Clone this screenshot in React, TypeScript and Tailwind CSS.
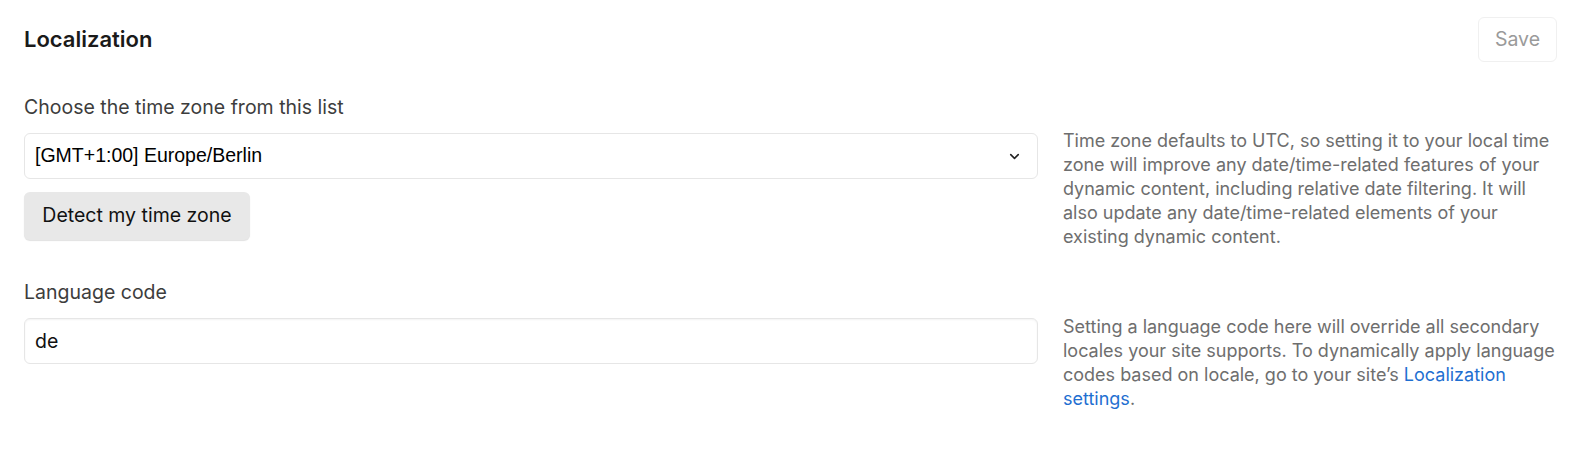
import { ChevronDown } from 'lucide-react';

const inter = { fontFamily: 'Inter, "Noto Sans", sans-serif' };

export default function App() {
  return (
    <div className="h-[454px] w-full bg-white pl-6 pr-[13px] font-['Inter',sans-serif]">
      <div className="flex items-center justify-between pt-[17px]">
        <h1 className="text-[22px] font-semibold leading-[45px] text-[#1a1a1a]">Localization</h1>
        <button className="h-[45px] w-[79px] rounded-md border border-[#f0f0f0] text-[19.5px] text-[#9a9a9a]">Save</button>
      </div>

      <div className="mt-[31px] flex gap-[25px]">
        <div className="w-[1014px] shrink-0">
          <label className="block text-[19.5px] leading-[28px] text-[#3d3d3d]">Choose the time zone from this list</label>
          <div className="mt-[12px] flex h-[46px] items-center justify-between rounded-md border border-[#e6e6e6] pl-[10px] pr-[15px]">
            <span className="font-['Liberation_Sans',Arial,sans-serif] text-[19.5px] text-black">[GMT+1:00] Europe/Berlin</span>
            <ChevronDown size={15} strokeWidth={2.5} className="text-[#222]" />
          </div>
          <button className="mt-[13px] h-[48px] w-[226px] rounded-md bg-[#e8e8e8] text-[19.5px] text-[#111] shadow-[0_1px_1px_rgba(0,0,0,0.12)]">
            Detect my time zone
          </button>
        </div>
        <p className="mt-[36px] w-[492px] text-[18px] leading-[24px] text-[#6e6e6e]" style={inter}>
          Time zone defaults to UTC, so setting it to your local time zone will improve any date/time-related features of your dynamic content, including relative date filtering. It will also update any date/time-related elements of your existing dynamic content.
        </p>
      </div>

      <div className="mt-[29px] flex gap-[25px]">
        <div className="w-[1014px] shrink-0">
          <label className="block text-[19.5px] leading-[28px] text-[#3d3d3d]">Language code</label>
          <input
            readOnly
            value="de"
            className="mt-[12px] block h-[46px] w-full rounded-md border border-[#e6e6e6] px-[10px] text-[19.5px] text-[#111] shadow-[inset_0_1px_2px_rgba(0,0,0,0.05)] outline-none"
          />
        </div>
        <p className="mt-[37px] w-[492px] text-[18px] leading-[24px] text-[#6e6e6e]" style={inter}>
          Setting a language code here will override all secondary locales your site supports. To dynamically apply language codes based on locale, go to your site’s{' '}
          <a className="text-[#1f6fd1]">Localization settings</a>.
        </p>
      </div>
    </div>
  );
}
